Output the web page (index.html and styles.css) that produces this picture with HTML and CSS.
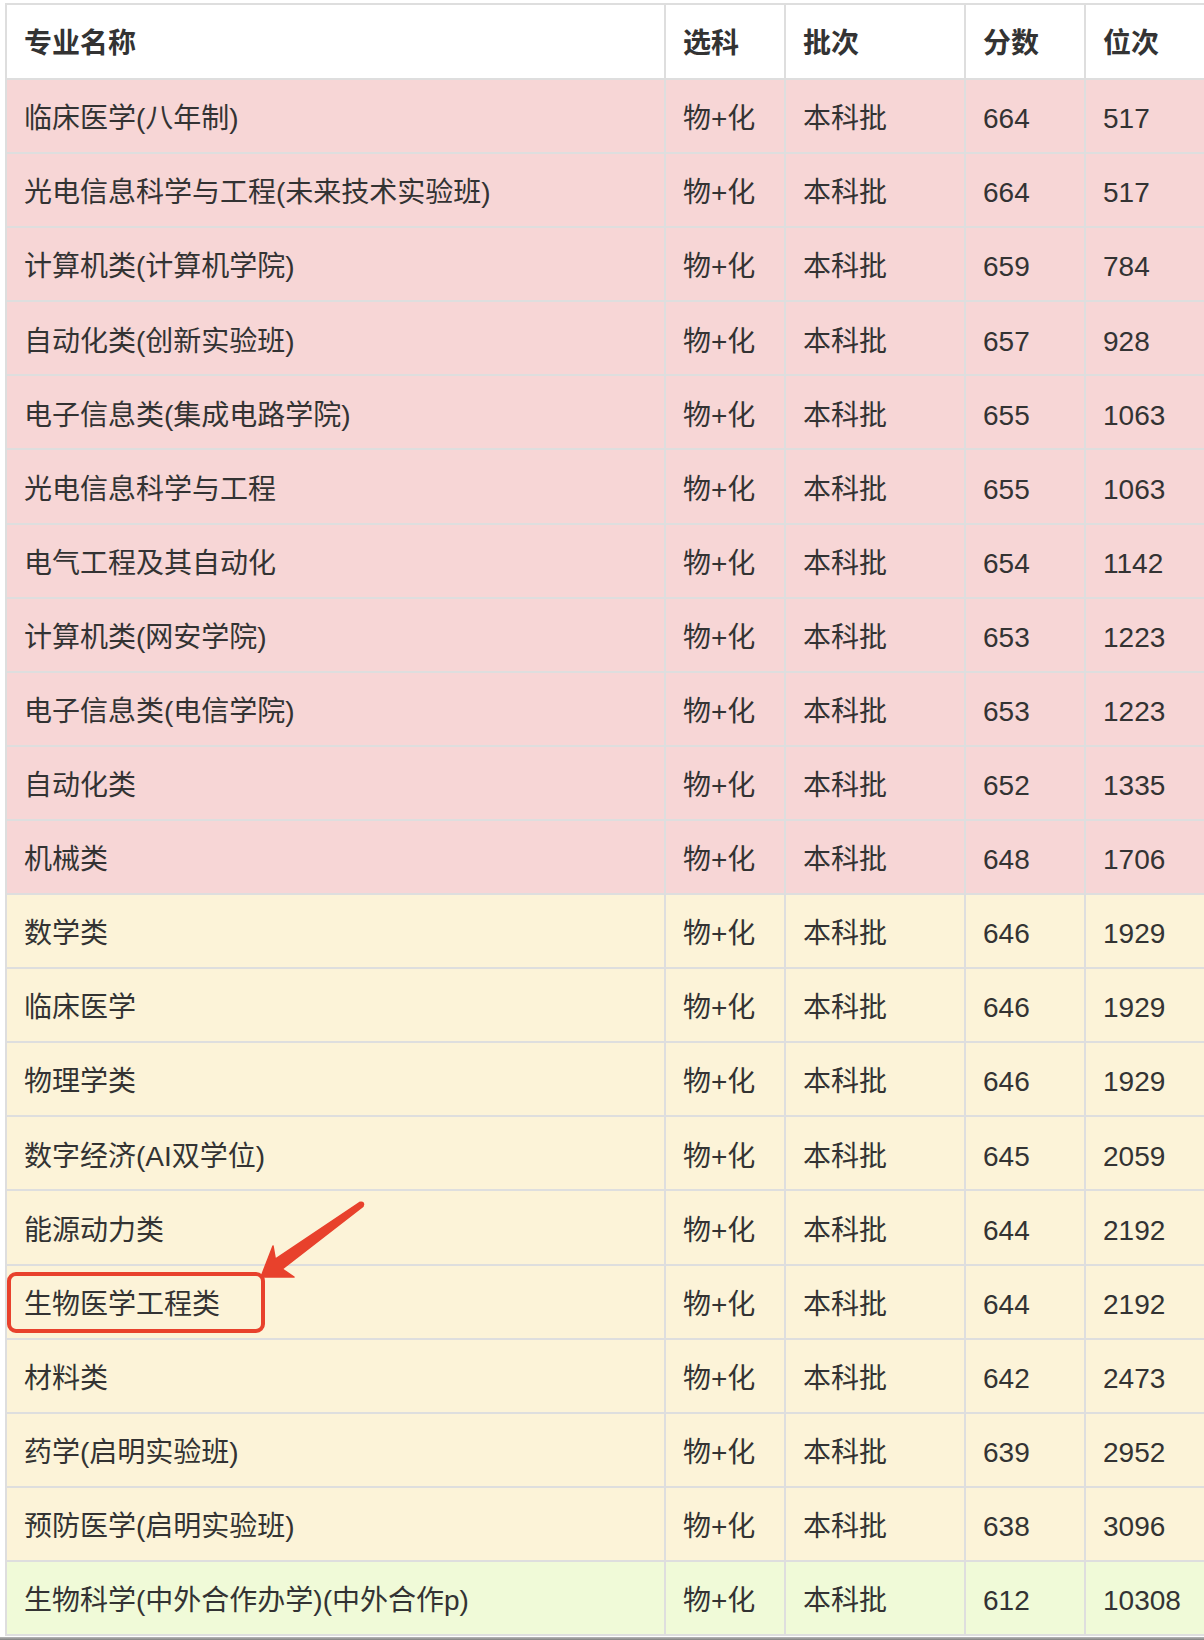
FILE: index.html
```html
<!DOCTYPE html>
<html lang="zh-CN">
<head>
<meta charset="utf-8">
<title>专业分数位次</title>
<link rel="stylesheet" href="styles.css">
</head>
<body>
<div class="page">
  <table class="scores">
    <colgroup>
      <col class="w-name">
      <col class="w-subj">
      <col class="w-batch">
      <col class="w-score">
      <col class="w-rank">
    </colgroup>
    <thead>
      <tr><th>专业名称</th><th>选科</th><th>批次</th><th>分数</th><th>位次</th></tr>
    </thead>
    <tbody>
      <tr class="pink"><td>临床医学(八年制)</td><td>物+化</td><td>本科批</td><td>664</td><td>517</td></tr>
      <tr class="pink"><td>光电信息科学与工程(未来技术实验班)</td><td>物+化</td><td>本科批</td><td>664</td><td>517</td></tr>
      <tr class="pink"><td>计算机类(计算机学院)</td><td>物+化</td><td>本科批</td><td>659</td><td>784</td></tr>
      <tr class="pink"><td>自动化类(创新实验班)</td><td>物+化</td><td>本科批</td><td>657</td><td>928</td></tr>
      <tr class="pink"><td>电子信息类(集成电路学院)</td><td>物+化</td><td>本科批</td><td>655</td><td>1063</td></tr>
      <tr class="pink"><td>光电信息科学与工程</td><td>物+化</td><td>本科批</td><td>655</td><td>1063</td></tr>
      <tr class="pink"><td>电气工程及其自动化</td><td>物+化</td><td>本科批</td><td>654</td><td>1142</td></tr>
      <tr class="pink"><td>计算机类(网安学院)</td><td>物+化</td><td>本科批</td><td>653</td><td>1223</td></tr>
      <tr class="pink"><td>电子信息类(电信学院)</td><td>物+化</td><td>本科批</td><td>653</td><td>1223</td></tr>
      <tr class="pink"><td>自动化类</td><td>物+化</td><td>本科批</td><td>652</td><td>1335</td></tr>
      <tr class="pink"><td>机械类</td><td>物+化</td><td>本科批</td><td>648</td><td>1706</td></tr>
      <tr class="yellow"><td>数学类</td><td>物+化</td><td>本科批</td><td>646</td><td>1929</td></tr>
      <tr class="yellow"><td>临床医学</td><td>物+化</td><td>本科批</td><td>646</td><td>1929</td></tr>
      <tr class="yellow"><td>物理学类</td><td>物+化</td><td>本科批</td><td>646</td><td>1929</td></tr>
      <tr class="yellow"><td>数字经济(AI双学位)</td><td>物+化</td><td>本科批</td><td>645</td><td>2059</td></tr>
      <tr class="yellow"><td>能源动力类</td><td>物+化</td><td>本科批</td><td>644</td><td>2192</td></tr>
      <tr class="yellow"><td>生物医学工程类</td><td>物+化</td><td>本科批</td><td>644</td><td>2192</td></tr>
      <tr class="yellow"><td>材料类</td><td>物+化</td><td>本科批</td><td>642</td><td>2473</td></tr>
      <tr class="yellow"><td>药学(启明实验班)</td><td>物+化</td><td>本科批</td><td>639</td><td>2952</td></tr>
      <tr class="yellow"><td>预防医学(启明实验班)</td><td>物+化</td><td>本科批</td><td>638</td><td>3096</td></tr>
      <tr class="green"><td>生物科学(中外合作办学)(中外合作p)</td><td>物+化</td><td>本科批</td><td>612</td><td>10308</td></tr>
    </tbody>
  </table>
  <div class="shade"></div>

  <div class="mark-box"></div>
  <svg class="mark-arrow" width="1204" height="1640" viewBox="0 0 1204 1640" aria-hidden="true">
    <polygon points="261,1277 273,1246 275.3,1259.2 359.9,1202.3 362.9,1206.3 282.3,1269 294,1277" fill="#e8412c" stroke="#e8412c" stroke-width="1.5" stroke-linejoin="round"/>
    <circle cx="361.4" cy="1204.3" r="2.8" fill="#e8412c"/>
  </svg>
</div>
</body>
</html>
```

FILE: styles.css
```css
html, body {
  margin: 0;
  padding: 0;
  background: #ffffff;
}

body {
  overflow: hidden;
}

.page {
  position: relative;
  width: 1204px;
  height: 1640px;
  overflow: hidden;
  box-sizing: border-box;
  padding: 3px 0 0 5px;
}

.scores {
  border-collapse: separate;
  border-spacing: 2px;
  background: #dedede;
  table-layout: fixed;
  width: 1243px;
  font-family: "Liberation Sans", "Noto Sans CJK SC", sans-serif;
  font-size: 28px;
  color: #333333;
}

.w-name { width: 657px; }
.w-subj { width: 118px; }
.w-batch { width: 178px; }
.w-score { width: 118px; }
.w-rank { width: 160px; }

.scores th,
.scores td {
  padding: 0 0 0 17px;
  text-align: left;
  vertical-align: middle;
  white-space: nowrap;
  overflow: hidden;
  line-height: 1.2;
}

.scores th {
  height: 69px;
  padding-top: 4px;
  background: #ffffff;
  font-weight: bold;
}

.scores td {
  height: 66.1px;
  padding-top: 6px;
}

.pink td { background: #f7d6d6; }
.yellow td { background: #fcf3d8; }
.green td { background: #f0fad8; }

.shade {
  height: 4px;
  margin-top: 1px;
  margin-left: -5px;
  background: linear-gradient(#b8b8b8, #6e6e6e);
}

.mark-box {
  position: absolute;
  left: 7px;
  top: 1272px;
  width: 258px;
  height: 61px;
  box-sizing: border-box;
  border: 4px solid #e8412c;
  border-radius: 9px;
}

.mark-arrow {
  position: absolute;
  left: 0;
  top: 0;
  pointer-events: none;
}
```
